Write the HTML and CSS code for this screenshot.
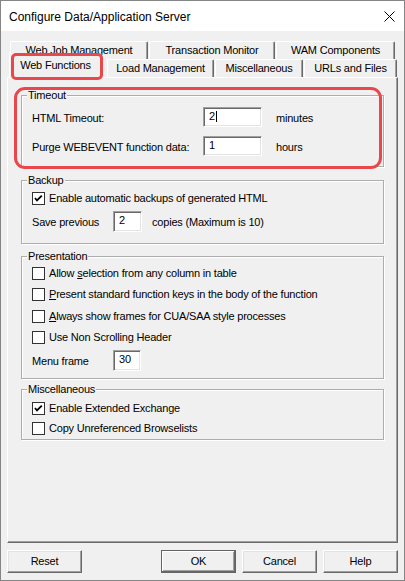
FILE: index.html
```html
<!DOCTYPE html>
<html>
<head>
<meta charset="utf-8">
<title>Configure Data/Application Server</title>
<link rel="stylesheet" href="styles.css">
</head>
<body>
<div class="window">
  <div class="titlebar">
    <span class="title">Configure Data/Application Server</span>
    <svg class="close" width="11" height="11" viewBox="0 0 11 11"><path d="M0.5 0.5 L10.5 10.5 M10.5 0.5 L0.5 10.5" stroke="#000" stroke-width="1" fill="none"/></svg>
  </div>
  <div class="client">
    <div class="tabrow row1">
      <div class="tab w138">Web Job Management</div>
      <div class="tab w126">Transaction Monitor</div>
      <div class="tab w119">WAM Components</div>
    </div>
    <div class="tabrow row2">
      <div class="tab selected">Web Functions</div>
      <div class="tab w107 after-sel">Load Management</div>
      <div class="tab w88">Miscellaneous</div>
      <div class="tab w93">URLs and Files</div>
    </div>
    <div class="panel">
      <div class="group g-timeout highlight">
        <div class="gtitle">Timeout</div>
        <div class="erow first">
          <span class="lbl lw171">HTML Timeout:</span>
          <div class="edit ew59 h20">2<span class="caret"></span></div>
          <span class="lbl unit">minutes</span>
        </div>
        <div class="erow second">
          <span class="lbl lw171">Purge WEBEVENT function data:</span>
          <div class="edit ew59 h20">1</div>
          <span class="lbl unit">hours</span>
        </div>
      </div>

      <div class="group g-backup">
        <div class="gtitle">Backup</div>
        <div class="crow first">
          <span class="cb"><svg width="11" height="11" viewBox="0 0 11 11"><polyline points="2,5 4,7.5 8.8,2.6" fill="none" stroke="#000" stroke-width="1.8"/></svg></span>
          <span class="clabel">Enable automatic backups of generated HTML</span>
        </div>
        <div class="erow save">
          <span class="lbl lw81">Save previous</span>
          <div class="edit ew29 h21">2</div>
          <span class="lbl unit2">copies (Maximum is 10)</span>
        </div>
      </div>

      <div class="group g-present">
        <div class="gtitle">Presentation</div>
        <div class="clist">
          <div class="crow"><span class="cb"></span><span class="clabel">Allow <u>s</u>election from any column in table</span></div>
          <div class="crow"><span class="cb"></span><span class="clabel"><u>P</u>resent standard function keys in the body of the function</span></div>
          <div class="crow"><span class="cb"></span><span class="clabel"><u>A</u>lways show frames for CUA/SAA style processes</span></div>
          <div class="crow"><span class="cb"></span><span class="clabel">Use Non Scrolling Header</span></div>
        </div>
        <div class="erow menu">
          <span class="lbl lw81">Menu frame</span>
          <div class="edit ew28 h21">30</div>
        </div>
      </div>

      <div class="group g-misc">
        <div class="gtitle">Miscellaneous</div>
        <div class="crow first">
          <span class="cb"><svg width="11" height="11" viewBox="0 0 11 11"><polyline points="2,5 4,7.5 8.8,2.6" fill="none" stroke="#000" stroke-width="1.8"/></svg></span>
          <span class="clabel">Enable Extended Exchange</span>
        </div>
        <div class="crow second">
          <span class="cb"></span>
          <span class="clabel">Copy Unreferenced Browselists</span>
        </div>
      </div>
    </div>
    <div class="buttons">
      <div class="btn">Reset</div>
      <div class="spacer"></div>
      <div class="btn default">OK</div>
      <div class="btn">Cancel</div>
      <div class="btn">Help</div>
    </div>
  </div>
</div>
</body>
</html>
```

FILE: styles.css
```css
html, body {
  margin: 0;
  padding: 0;
}
body {
  font-family: "Liberation Sans", Arial, sans-serif;
  font-size: 11px;
  line-height: 13px;
  letter-spacing: -0.2px;
  color: #000;
  background: #f0f0f0;
}
.window {
  width: 405px;
  height: 581px;
  box-sizing: border-box;
  border: 1px solid #858585;
  display: flex;
  flex-direction: column;
  background: #f0f0f0;
}
.titlebar {
  height: 30px;
  flex: none;
  background: #fff;
  display: flex;
  align-items: center;
  justify-content: space-between;
  padding: 0 9px 0 8px;
}
.title {
  font-size: 12px;
  line-height: 14px;
  letter-spacing: 0;
  padding-top: 1px;
}
.close {
  display: block;
  margin-top: 1px;
}
.client {
  flex: 1;
  display: flex;
  flex-direction: column;
  padding: 10px 6px 0 6px;
}
.tabrow {
  display: flex;
  height: 18px;
  margin-left: 3px;
  flex: none;
}
.row1 {
  gap: 1px;
}
.row2 {
  align-items: flex-end;
  gap: 1px;
}
.tab {
  box-sizing: border-box;
  height: 18px;
  border-top: 1px solid #fff;
  border-left: 1px solid #fff;
  border-right: 1px solid #696969;
  box-shadow: inset -1px 0 0 #a0a0a0;
  border-radius: 2px 2px 0 0;
  background: #f0f0f0;
  text-align: center;
  padding-top: 2px;
  white-space: nowrap;
}
.w138 { width: 138px; }
.w126 { width: 126px; }
.w119 { width: 119px; }
.w107 { width: 107px; }
.w88 { width: 88px; }
.w93 { width: 93px; }
.row2 .tab {
  padding-top: 2px;
}
.row2 .tab.selected {
  position: relative;
  z-index: 2;
  width: 93px;
  height: 25px;
  margin-left: -1px;
  margin-bottom: -1px;
  padding-top: 5px;
}
.row2 .tab.after-sel {
  margin-left: 4px;
}
.tab.selected::after {
  content: "";
  position: absolute;
  left: 1px;
  right: -2px;
  top: -1px;
  bottom: -2px;
  border: 3px solid #e9474b;
  border-radius: 5px;
}
.panel {
  position: relative;
  flex: none;
  box-sizing: border-box;
  height: 466px;
  border: 1px solid;
  border-color: #fff #696969 #696969 #fff;
  box-shadow: inset -1px -1px 0 #a0a0a0;
  padding: 0 13px;
  display: flex;
  flex-direction: column;
}
.group {
  position: relative;
  border: 1px solid #adadad;
  box-shadow: inset 1px 1px 0 #fff, 1px 1px 0 #fff;
  padding: 0 10px 10px 10px;
  display: flex;
  flex-direction: column;
}
.gtitle {
  width: fit-content;
  margin: -7px 0 0 -5px;
  padding: 0 1px;
  background: #f0f0f0;
  line-height: 13px;
  height: 13px;
}
.g-timeout { margin-top: 17px; padding-bottom: 10px; }
.g-backup { margin-top: 13px; padding-bottom: 11px; }
.g-present { margin-top: 12px; padding-bottom: 7px; }
.g-misc { margin-top: 10px; padding-bottom: 4px; }

.highlight::after {
  content: "";
  position: absolute;
  left: -8px;
  right: 1px;
  top: -9px;
  bottom: -3px;
  border: 3px solid #e9474b;
  border-radius: 11px;
  z-index: 3;
}

.erow {
  display: flex;
  align-items: center;
}
.g-timeout .erow.first { margin-top: 5px; }
.g-timeout .erow.second { margin-top: 9px; }
.erow.save { margin-top: 6px; }
.erow.menu { margin-top: 6px; }
.lbl {
  white-space: nowrap;
  padding-top: 2px;
}
.lw171 { width: 171px; flex: none; }
.lw81 { width: 81px; flex: none; }
.unit { margin-left: 14px; }
.unit2 { margin-left: 10px; }

.edit {
  box-sizing: border-box;
  background: #fff;
  border: 1px solid;
  border-color: #a0a0a0 #fff #fff #a0a0a0;
  box-shadow: inset 1px 1px 0 #696969, inset -1px -1px 0 #e3e3e3;
  padding: 2px 0 0 5px;
  display: flex;
  align-items: flex-start;
}
.ew59 { width: 59px; }
.ew29 { width: 29px; }
.ew28 { width: 28px; }
.h20 { height: 20px; }
.h21 { height: 21px; }
.caret {
  display: inline-block;
  width: 1px;
  height: 11px;
  background: #000;
  margin: 1px 0 0 1px;
}

.crow {
  display: flex;
  align-items: center;
  height: 13px;
}
.g-backup .crow.first { margin-top: 5px; }
.g-misc .crow.first { margin-top: 6px; }
.g-misc .crow.second { margin-top: 7px; }
.clist {
  display: flex;
  flex-direction: column;
  gap: 8.4px;
  margin-top: 4px;
}
.cb {
  box-sizing: border-box;
  width: 13px;
  height: 13px;
  flex: none;
  background: #fff;
  border: 1px solid #333;
  display: flex;
}
.cb svg {
  display: block;
}
.clabel {
  margin-left: 4px;
  white-space: nowrap;
}
.clabel u {
  text-decoration: underline;
  text-underline-offset: 1px;
}

.buttons {
  display: flex;
  gap: 6px;
  margin-top: 7px;
  flex: none;
}
.spacer {
  flex: 1;
}
.btn {
  box-sizing: border-box;
  width: 75px;
  height: 23px;
  border: 1px solid;
  border-color: #fff #696969 #696969 #fff;
  box-shadow: inset -1px -1px 0 #a0a0a0, inset 1px 1px 0 #e3e3e3;
  background: #f0f0f0;
  text-align: center;
  padding-top: 4px;
}
.btn.default {
  border-color: #646464;
  box-shadow: inset -1px -1px 0 #696969, inset 1px 1px 0 #fff, inset -2px -2px 0 #a0a0a0;
}
```
